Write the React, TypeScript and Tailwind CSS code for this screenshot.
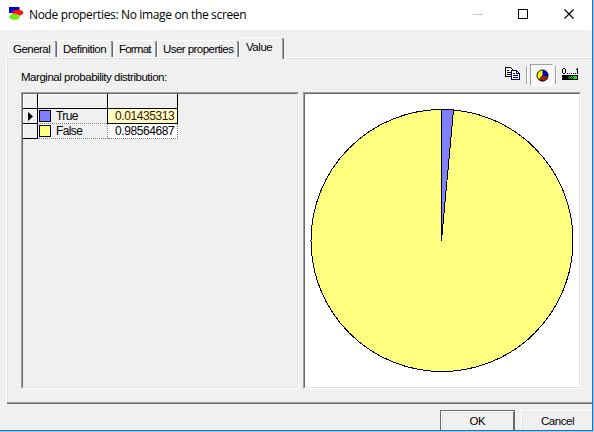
import React from 'react';

function Tab({ label, box, text }: { label: string; box: string; text: string }) {
  return (
    <div className={`flex shrink-0 rounded-t-[2px] border-t border-l border-white bg-[#f0f0f0] shadow-[inset_-1px_0_0_#696969,inset_-2px_0_0_#a0a0a0] ${box}`}>
      <span className={`whitespace-nowrap ${text}`}>{label}</span>
    </div>
  );
}

function Inset({ className, children }: { className: string; children?: React.ReactNode }) {
  return (
    <div className={`h-[297px] shrink-0 border border-t-[#a0a0a0] border-r-white border-b-white border-l-[#a0a0a0] ${className}`}>
      <div className="h-full w-full border border-t-[#696969] border-r-[#e3e3e3] border-b-[#e3e3e3] border-l-[#696969]">
        {children}
      </div>
    </div>
  );
}

function Logo() {
  return (
    <svg width="16" height="16" viewBox="0 0 16 16">
      <rect x="1" y="1" width="10.500" height="6" fill="#0000d0" />
      <ellipse cx="9.800" cy="6.700" rx="5.500" ry="3" fill="#ff1414" />
      <ellipse cx="6.500" cy="10.800" rx="5.300" ry="3" fill="#70ea10" />
    </svg>
  );
}

function CopyIcon() {
  return (
    <svg width="16" height="14" viewBox="0 0 16 14" shapeRendering="crispEdges">
      <path d="M.5 .5H5.500L8.500 3.500V9.500H.5Z" fill="#fff" stroke="#000" />
      <path d="M2 3.500H4M2 5.500H6M2 7.500H6" stroke="#000" />
      <path d="M6.500 3.500H11.500L14.500 6.500V12.500H6.500Z" fill="#fff" stroke="#000080" />
      <path d="M11.500 3.500V6.500H14.500M8 6.500H10M8 8.500H13M8 10.500H13" fill="none" stroke="#000080" />
    </svg>
  );
}

function PieIcon() {
  return (
    <svg width="13" height="13" viewBox="0 0 13 13">
      <circle cx="6.500" cy="6.500" r="5.500" fill="#ffff00" />
      <path d="M6.500 6.500V1A5.500 5.500 0 0 1 12 7Z" fill="#0000ff" />
      <path d="M6.500 6.500L12 7A5.500 5.500 0 0 1 3 11Z" fill="#a02020" />
      <circle cx="6.500" cy="6.500" r="5.500" fill="none" stroke="#000" />
      <path d="M6.500 6.500H12M6.500 6.500L3 10.500" stroke="#000" strokeWidth=".8" fill="none" />
    </svg>
  );
}

function ScaleIcon() {
  return (
    <svg width="17" height="12" viewBox="0 0 17 12" shapeRendering="crispEdges">
      <path d="M1 .5H3M.5 1V5M3.500 1V5M1 5.500H3M5 5.500H6M7 5.500H8M9 5.500H10M11 5.500H12M13 5.500H14M15.500 0V6M14 1.500H15" stroke="#000" fill="none" />
      <path d="M0 7H16V12H0Z" fill="#000" />
      <path d="M7 8h1v1h-1zM9 8h1v1h-1zM11 8h4v1h-4zM6 9h1v1h-1zM8 9h1v1h-1zM10 9h1v1h-1zM12 9h3v1h-3zM7 10h1v1h-1zM9 10h1v1h-1zM11 10h4v1h-4z" fill="#00f000" />
    </svg>
  );
}

const rows = [
  { name: 'True', value: '0.01435313', swatch: 'bg-[#8080ff]', selected: true },
  { name: 'False', value: '0.98564687', swatch: 'bg-[#ffff80]', selected: false },
];

function Grid() {
  return (
    <div className="w-[155px] text-[12px] leading-[15px]">
      <div className="flex h-[15px] border-b border-black">
        <div className="w-[15px] border-r border-black shadow-[inset_1px_1px_0_#fff]" />
        <div className="w-[70px] border-r border-black shadow-[inset_1px_1px_0_#fff]" />
        <div className="w-[70px] border-r border-black shadow-[inset_1px_1px_0_#fff]" />
      </div>
      {rows.map((row) => (
        <div key={row.name} className="flex h-[15px]">
          <div className="flex w-[15px] items-center border-r border-b border-black pl-[5px] shadow-[inset_1px_1px_0_#fff]">
            {row.selected && (
              <svg width="5" height="9" viewBox="0 0 5 9"><path d="M0 0L5 4.500L0 9Z" /></svg>
            )}
          </div>
          <div className={`flex border-b border-dotted border-[#808080] pt-px pl-px ${row.selected ? 'w-[69px]' : 'w-[70px] border-r'}`}>
            <div className={`h-3 w-3 shrink-0 border border-black ${row.swatch}`} />
            <span className="-mt-px ml-[5px] text-[12px] leading-[14px] tracking-[-0.6px]">{row.name}</span>
          </div>
          {row.selected ? (
            <div className="-mt-px h-4 w-[71px] border border-black bg-[#ffffc0] pl-[7px] text-[12px] leading-[15px] tracking-[-0.42px] text-[#401008]">{row.value}</div>
          ) : (
            <div className="w-[70px] border-r border-b border-dotted border-[#808080] bg-white pl-[7px] text-[12px] leading-[14px] tracking-[-0.42px]">{row.value}</div>
          )}
        </div>
      ))}
    </div>
  );
}

export default function App() {
  return (
    <div className="flex h-[432px] w-[594px] flex-col overflow-hidden bg-[#a9c4dc] font-['Liberation_Sans',Arial,sans-serif] text-black">
      <div className="h-[431px] w-[593px] overflow-hidden border-r border-b border-[#0078d7] bg-[#f0f0f0]">
        <header className="flex h-[30px] items-start bg-white font-['Open_Sans','Noto_Sans',sans-serif]">
          <div className="pt-[6px] pl-2"><Logo /></div>
          <h1 className="pt-[6px] pl-[5px] text-[12px] leading-[18px] whitespace-nowrap tracking-[-0.35px]">Node properties: No image on the screen</h1>
          <svg className="mt-[9px] mr-[17px] ml-auto shrink-0" width="102" height="11" viewBox="0 0 102 11">
            <path d="M0 5.500H10" stroke="#cccccc" />
            <rect x="45.500" y=".5" width="9" height="9" fill="none" stroke="#000" />
            <path d="M91.500 .5L100.500 9.500M100.500 .5L91.500 9.500" stroke="#000" strokeWidth="1.200" />
          </svg>
        </header>
        <nav className="flex h-[27px] items-end pl-2 text-[11.500px]">
          <Tab label="General" box="h-[17px] w-[49px] pl-1" text="leading-[16px] tracking-[-0.52px]" />
          <Tab label="Definition" box="ml-px h-[17px] w-[55px] pl-1" text="leading-[16px] tracking-[-0.48px]" />
          <Tab label="Format" box="ml-px h-[17px] w-[43px] pl-1" text="leading-[16px] tracking-[-0.8px]" />
          <Tab label="User properties" box="h-[17px] w-[82px] pl-[5px]" text="leading-[16px] tracking-[-0.55px]" />
          <Tab label="Value" box="relative -mb-0.5 h-[22px] w-[45px] pl-[6px]" text="leading-[19px] tracking-[-0.45px]" />
        </nav>
        <main className="ml-[6px] h-[347px] w-[586px] border-t border-l border-white shadow-[inset_0_-1px_0_#696969,inset_0_-2px_0_#a0a0a0,inset_1px_1px_0_#e3e3e3]">
          <div className="flex h-[34px] items-start pl-[14px]">
            <span className="pt-[11px] text-[11.500px] leading-[16px] whitespace-nowrap tracking-[-0.47px]">Marginal probability distribution:</span>
            <div className="mr-[13px] ml-auto flex items-start pt-[6px]">
              <div className="mt-[3px]"><CopyIcon /></div>
              <div className="mt-[2px] ml-[5px] h-[18px] w-0.5 border-r border-l border-r-white border-l-[#a0a0a0]" />
              <div className="ml-[2px] flex h-[22px] w-[23px] items-center justify-center border border-t-[#a0a0a0] border-r-white border-b-white border-l-[#a0a0a0] bg-[#f8f8f8] pl-px"><PieIcon /></div>
              <div className="mt-[2px] ml-[2px] h-[18px] w-0.5 border-r border-l border-r-white border-l-[#a0a0a0]" />
              <div className="mt-1 ml-[5px]"><ScaleIcon /></div>
            </div>
          </div>
          <div className="flex gap-1 pl-[14px]">
            <Inset className="w-[278px]"><Grid /></Inset>
            <Inset className="w-[278px] bg-white">
              <svg width="274" height="293" viewBox="305 94 274 293" shapeRendering="crispEdges">
                <circle cx="442" cy="240.500" r="131" fill="#ffff80" stroke="#000" />
                <path d="M441.500 240.500V109.500Q448 109.500 453.500 110Z" fill="#8080ff" stroke="#000" />
              </svg>
            </Inset>
          </div>
        </main>
        <footer className="flex items-start gap-[6px] pt-[6px] pl-[440px] text-[11.500px] leading-[16px]">
          <button className="flex h-[25px] w-[75px] shrink-0 justify-center border border-[#696969] pt-[2px] shadow-[inset_1px_1px_0_#fff,inset_-1px_0_0_#696969,inset_2px_2px_0_#e3e3e3]">
            <span className="tracking-[-0.4px]">OK</span>
          </button>
          <button className="flex h-[25px] w-[75px] shrink-0 border-t border-l border-white pt-[2px] pl-[19px] shadow-[inset_1px_1px_0_#e3e3e3]">
            <span className="tracking-[-0.45px]">Cancel</span>
          </button>
        </footer>
      </div>
    </div>
  );
}
